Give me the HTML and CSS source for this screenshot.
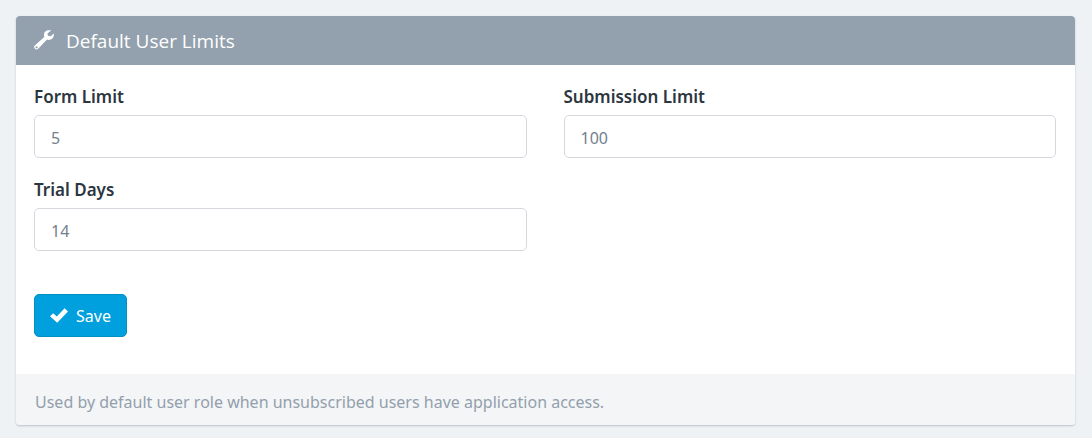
FILE: index.html
```html
<!DOCTYPE html>
<html lang="en">
<head>
<meta charset="utf-8">
<meta name="viewport" content="width=device-width, initial-scale=1">
<title>Default User Limits</title>
<link rel="stylesheet" href="styles.css">
</head>
<body>
<main class="panel">
  <header class="panel-heading">
    <svg class="wrench" viewBox="0 0 20 20" aria-hidden="true">
      <path fill="currentColor" fill-rule="evenodd" d="M17.2.6C15.200 -.2 12.800 0 11.300 1.600C9.900 3 9.700 5.100 10.300 6.900L.8 15.500C-.1 16.400-.1 17.800.8 18.700C1.700 19.700 3.200 19.800 4.200 18.800L13 9.600C14.900 10.200 17 9.900 18.400 8.500C19.700 7.200 20.200 5.200 19.700 3.500L16.800 6.200L14 5.700L13.400 3.400ZM2.600 16.200A1.100 1.100 0 1 1 2.600 18.400A1.100 1.100 0 1 1 2.600 16.200Z"/>
    </svg>
    <h1 class="panel-title">Default User Limits</h1>
  </header>
  <form class="panel-body">
    <div class="fields">
      <div class="field">
        <label class="label" for="form-limit">Form Limit</label>
        <input class="input" id="form-limit" type="text" value="5">
      </div>
      <div class="field">
        <label class="label" for="submission-limit">Submission Limit</label>
        <input class="input" id="submission-limit" type="text" value="100">
      </div>
      <div class="field">
        <label class="label" for="trial-days">Trial Days</label>
        <input class="input" id="trial-days" type="text" value="14">
      </div>
    </div>
    <button class="save" type="button">
      <svg class="check" viewBox="0 0 18 15" aria-hidden="true">
        <path fill="currentColor" d="M0 8.300L3.200 5.300L6.800 8.600L14.600 .3L18 3.600L7.200 14.700Z"/>
      </svg>
      Save
    </button>
  </form>
  <footer class="panel-footer">Used by default user role when unsubscribed users have application access.</footer>
</main>
</body>
</html>
```
FILE: styles.css
```css
* {
  box-sizing: border-box;
}

body {
  margin: 0;
  padding: 16px 17px 12px 16px;
  background: #eef2f5;
  color: #2c363f;
  font: 16px/24px "Segoe UI", "Noto Sans", "Open Sans", sans-serif;
}

.panel {
  overflow: hidden;
  border-radius: 4px;
  background: #fff;
  box-shadow: 0 1px 2px rgba(60, 80, 110, 0.3);
}

.panel-heading {
  display: flex;
  align-items: center;
  gap: 12px;
  padding: 13px 18px 12px;
  background: #93a0ad;
  color: #fff;
}

.wrench {
  width: 20px;
  height: 20px;
  margin-bottom: 3px;
}

.panel-title {
  margin: 0;
  font-family: "Segoe UI", "Open Sans", sans-serif;
  font-size: 19px;
  font-weight: 400;
}

.panel-body {
  padding: 20px 19px 37px 18px;
}

.fields {
  display: grid;
  grid-template-columns: 1fr 1fr;
  gap: 20px 37px;
}

.label {
  display: block;
  margin-bottom: 6px;
  font-size: 17px;
  font-weight: 600;
}

.input {
  display: block;
  width: 100%;
  height: 43px;
  padding: 2px 16px 0;
  border: 1px solid #d4d7dc;
  border-radius: 5px;
  background: #fff;
  color: #74808d;
  font: inherit;
}

.save {
  display: inline-flex;
  align-items: center;
  gap: 8px;
  height: 43px;
  margin-top: 43px;
  padding: 0 15px;
  border: 1px solid #0090c4;
  border-radius: 5px;
  background: #009fdd;
  color: #fff;
  font: inherit;
}

.check {
  width: 18px;
  height: 15px;
}

.panel-footer {
  padding: 16px 19px 11px;
  background: #f3f5f7;
  color: #939fac;
}
```
